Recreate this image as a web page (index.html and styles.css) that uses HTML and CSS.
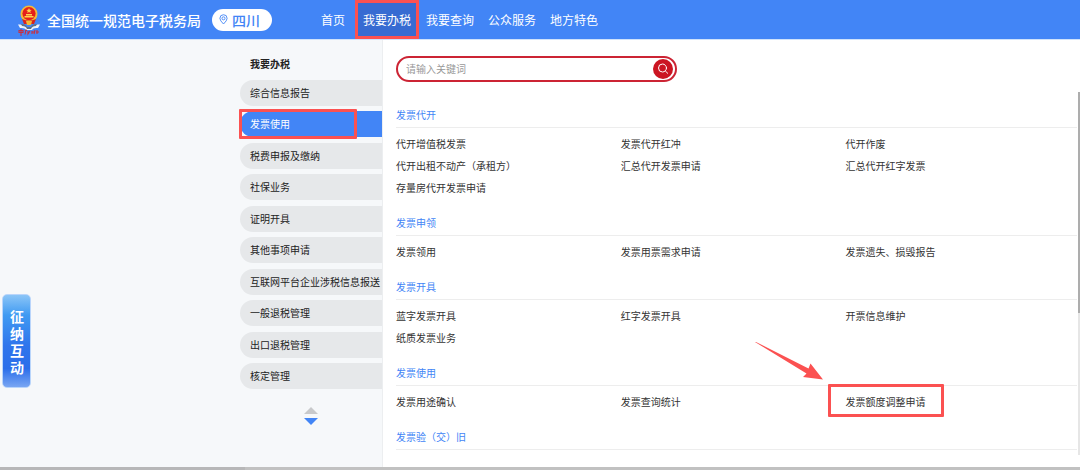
FILE: index.html
```html
<!DOCTYPE html>
<html lang="zh-CN">
<head>
<meta charset="utf-8">
<title>全国统一规范电子税务局</title>
<link rel="stylesheet" href="styles.css">
</head>
<body>
<header class="topbar">
  <svg class="emblem" viewBox="0 0 24 32" aria-hidden="true">
    <path d="M1 20.500Q7 20 9 23h6q2-3 8-2.500l-2 3.500q-5-.5-6 2H9q-1-2.500-6-2z" fill="#eef3fa"/>
    <path d="M4 20q5 0 6 3h4q1-3 6-3l-1 2q-4 0-5 3h-4q-1-3-5-3z" fill="#5e7186"/>
    <circle cx="12" cy="10" r="8.500" fill="#f3ba38"/>
    <circle cx="12" cy="9.600" r="6.600" fill="#e51f1b"/>
    <path d="M12 4l.8 1.700 1.900.2-1.400 1.200.4 1.900-1.700-.9-1.700.9.4-1.900-1.400-1.200 1.900-.2zM7.500 12h9v1.500h-9zM9 10h6v1.500H9z" fill="#ffd34c"/>
    <path d="M5 15q7 3.500 14 0l-2 5H7z" fill="#d9241f"/>
    <path d="M9 17h6l-1 4h-4z" fill="#f2b935"/>
    <path d="M2 26.500h4v2H2zM4 25v7M8 27l2-.8M9 25.500l-1 5M11 27v3l2-3M15 27v3M15 28h2M18 26l-1 4M20 26v4M19 28h3" fill="none" stroke="#c92f40" stroke-width="1.100"/>
  </svg>
  <h1 class="site-name">全国统一规范电子税务局</h1>
  <button class="region" type="button">
    <svg class="pin" viewBox="0 0 10 12" aria-hidden="true"><path d="M5 11Q1 7.200 1 4.700a4 4 0 0 1 8 0Q9 7.200 5 11z"/><circle cx="5" cy="4.700" r="1.700"/></svg>
    四川
  </button>
  <nav class="nav">
    <a href="#">首页</a>
    <a class="nav-current" href="#">我要办税</a>
    <a href="#">我要查询</a>
    <a href="#">公众服务</a>
    <a href="#">地方特色</a>
  </nav>
</header>

<div class="page">
  <aside class="sidebar">
    <h2 class="side-title">我要办税</h2>
    <ul class="menu">
      <li><a href="#">综合信息报告</a></li>
      <li class="menu-current"><a href="#">发票使用</a></li>
      <li><a href="#">税费申报及缴纳</a></li>
      <li><a href="#">社保业务</a></li>
      <li><a href="#">证明开具</a></li>
      <li><a href="#">其他事项申请</a></li>
      <li><a href="#">互联网平台企业涉税信息报送</a></li>
      <li><a href="#">一般退税管理</a></li>
      <li><a href="#">出口退税管理</a></li>
      <li><a href="#">核定管理</a></li>
    </ul>
    <div class="pager">
      <button class="page-up" type="button" aria-label="上一页"></button>
      <button class="page-down" type="button" aria-label="下一页"></button>
    </div>
  </aside>

  <main class="content">
    <form class="search">
      <input type="text" placeholder="请输入关键词" aria-label="请输入关键词">
      <button type="button" aria-label="搜索">
        <svg viewBox="0 0 20 20" aria-hidden="true"><circle cx="9.500" cy="9" r="4"/><path d="M12.400 12l2.300 2.300"/></svg>
      </button>
    </form>

    <section class="group">
      <h3>发票代开</h3>
      <ul>
        <li><a href="#">代开增值税发票</a></li><li><a href="#">发票代开红冲</a></li><li><a href="#">代开作废</a></li>
        <li><a href="#">代开出租不动产（承租方）</a></li><li><a href="#">汇总代开发票申请</a></li><li><a href="#">汇总代开红字发票</a></li>
        <li><a href="#">存量房代开发票申请</a></li>
      </ul>
    </section>
    <section class="group">
      <h3>发票申领</h3>
      <ul>
        <li><a href="#">发票领用</a></li><li><a href="#">发票用票需求申请</a></li><li><a href="#">发票遗失、损毁报告</a></li>
      </ul>
    </section>
    <section class="group">
      <h3>发票开具</h3>
      <ul>
        <li><a href="#">蓝字发票开具</a></li><li><a href="#">红字发票开具</a></li><li><a href="#">开票信息维护</a></li>
        <li><a href="#">纸质发票业务</a></li>
      </ul>
    </section>
    <section class="group">
      <h3>发票使用</h3>
      <ul>
        <li><a href="#">发票用途确认</a></li><li><a href="#">发票查询统计</a></li>
        <li class="marked"><a href="#">发票额度调整申请</a>
          <svg class="arrow" viewBox="0 0 68 38" aria-hidden="true"><path d="M0 0L1 0 53.500 26.500 55.500 21.500 68 37.500 48 35 51.500 31.500Z"/></svg>
        </li>
      </ul>
    </section>
    <section class="group">
      <h3>发票验（交）旧</h3>
    </section>
    <div class="scroll-track"><div class="scroll-thumb"></div></div>
  </main>
</div>
<div class="hscroll"><div class="hscroll-start"></div></div>
<button class="chat" type="button">征纳互动</button>
</body>
</html>
```

FILE: styles.css
```css
*, *::before, *::after { box-sizing: border-box; }

body {
  margin: 0;
  height: 100vh;
  display: flex;
  flex-direction: column;
  overflow: hidden;
  background: #f6f8fa;
  color: #333;
  font: 10px/20px "Noto Sans CJK SC", sans-serif;
}

h1, h2, h3, ul { margin: 0; padding: 0; }
ul { list-style: none; }
a { color: inherit; text-decoration: none; }
button { font: inherit; border: 0; padding: 0; cursor: pointer; }

.topbar {
  display: flex;
  align-items: center;
  flex: none;
  height: 40px;
  padding-left: 17px;
  background: #4285f6;
  border-bottom: 1px solid #cfe2fb;
  color: #fff;
}
.emblem { width: 24px; height: 32px; }
.site-name { margin-left: 6px; font-size: 14px; font-weight: 500; }
.region {
  display: flex;
  align-items: center;
  gap: 4px;
  height: 22px;
  margin-left: 11px;
  padding: 0 12px 0 7px;
  border-radius: 11px;
  background: #fff;
  color: #4285f6;
  font-size: 14px;
  font-weight: 500;
}
.pin { width: 9px; height: 11px; fill: none; stroke: #4285f6; }
.nav { display: flex; align-self: stretch; margin-left: 42px; font-size: 12px; }
.nav a { display: flex; align-items: center; padding: 0 7px; }
.nav .nav-current {
  margin: 0 0 0 3px;
  background: #376bd2;
  border: 3px solid #fb5151;
  padding: 0 5px;
}

.page { display: flex; flex: 1; min-height: 0; }

.sidebar {
  display: flex;
  flex-direction: column;
  width: 382px;
  flex: none;
  padding: 14px 0 42px 240px;
}
.side-title { padding-left: 10px; font-size: 10px; color: #222; }
.menu {
  display: flex;
  flex: 1;
  flex-direction: column;
  justify-content: space-between;
  margin-top: 6px;
}
.menu a {
  display: block;
  padding-left: 10px;
  border-radius: 13px 0 0 13px;
  background: #e6e8ea;
  color: #222;
  line-height: 26px;
  white-space: nowrap;
}
.menu-current { position: relative; }
.menu .menu-current a { background: #4285f6; color: #fff; }
.menu-current::after {
  content: "";
  position: absolute;
  inset: -2px 25px -2px -1px;
  border: 3px solid #fb5151;
  border-radius: 1px;
}
.pager { display: flex; flex-direction: column; align-items: center; gap: 4px; margin-top: 18px; }
.pager button { width: 14px; height: 7px; background: #c8c9cb; }
.page-up { clip-path: polygon(50% 0, 100% 100%, 0 100%); }
.pager .page-down { background: #4285f6; clip-path: polygon(0 0, 100% 0, 50% 100%); }

.content {
  position: relative;
  flex: 1;
  min-width: 0;
  overflow: hidden;
  padding: 16px 3px 0 13px;
  border-left: 1px solid #eceef0;
  background: #fff;
}
.search {
  display: flex;
  align-items: center;
  width: 281px;
  height: 26px;
  margin-bottom: 23px;
  padding: 0 2px 0 8px;
  border: 2px solid #cc2434;
  border-radius: 13px;
}
.search input {
  flex: 1;
  min-width: 0;
  padding: 0;
  border: 0;
  outline: 0;
  background: none;
  font: inherit;
}
.search input::placeholder { color: #999; }
.search button { width: 20px; height: 20px; border-radius: 50%; background: #cb1522; }
.search svg { display: block; fill: none; stroke: #fff; stroke-linecap: round; }

.group h3 {
  padding-bottom: 2px;
  border-bottom: 1px solid #ededed;
  color: #4285f6;
  font-size: 10px;
  font-weight: 400;
}
.group ul {
  display: grid;
  grid-template-columns: repeat(3, 33%);
  padding: 5px 0 14px;
  line-height: 22px;
}
.marked { position: relative; }
.marked::after {
  content: "";
  position: absolute;
  top: -7px;
  left: -17px;
  width: 116px;
  height: 33px;
  border: 3px solid #fb5151;
  border-radius: 1px;
  pointer-events: none;
}
.arrow {
  position: absolute;
  top: -49px;
  left: -90px;
  width: 68px;
  height: 38px;
  fill: #fb5151;
}

.scroll-track {
  position: absolute;
  top: 52px;
  right: 0;
  bottom: 12px;
  width: 2px;
  background: #e6e6e6;
}
.scroll-thumb { height: 61%; background: #adadad; }

.hscroll { flex: none; height: 3px; background: #c1c1c1; }
.hscroll-start { width: 245px; height: 3px; background: #b7b7b8; }

.chat {
  position: absolute;
  top: 294px;
  left: 2px;
  width: 29px;
  padding: 13px 7px 11px;
  border: 1px solid #b9d5fb;
  border-radius: 5px;
  background: linear-gradient(#8bc5f7, #3f9af2 22%, #2f75ec 55%, #2b6eea 80%, #79a6f3);
  color: #fff;
  font-size: 14px;
  font-weight: 700;
  line-height: 17px;
}
```
